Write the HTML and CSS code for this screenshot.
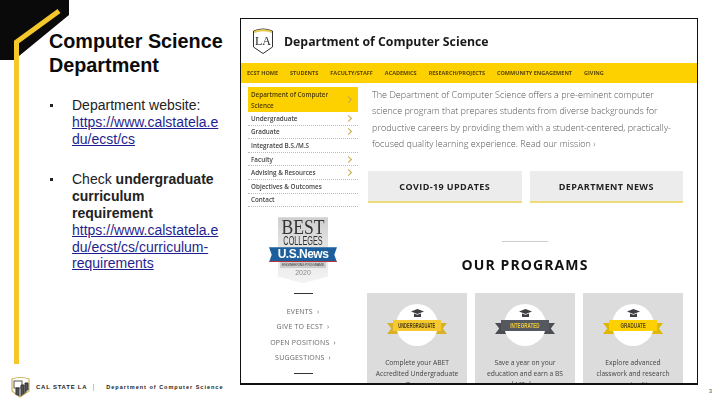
FILE: index.html
```html
<!DOCTYPE html>
<html lang="en">
<head>
<meta charset="utf-8">
<title>Computer Science Department</title>
<link rel="stylesheet" href="styles.css">
</head>
<body>
<div class="slide">
  <svg class="corner" width="70" height="364" viewBox="0 0 70 364">
    <polygon points="0,0 69,0 69,15 19,56 14,60 0,60" fill="#0a0a0a"/>
    <polyline points="59,11 16.500,42 16.500,364" fill="none" stroke="#f4c82a" stroke-width="5"/>
  </svg>
  <section class="left">
    <h1 class="title">Computer Science<br>Department</h1>
    <ul class="bullets">
      <li>Department website:<br><a href="#">https://www.calstatela.e<br>du/ecst/cs</a></li>
      <li>Check <b>undergraduate</b><br><b>curriculum</b><br><b>requirement</b><br><a href="#">https://www.calstatela.e<br>du/ecst/cs/curriculum-<br>requirements</a></li>
    </ul>
    <footer class="foot">
      <svg class="foot-logo" width="21" height="22" viewBox="0 0 21 22">
        <path d="M2 3 Q10 0 19 3 V15 L10 21 L2 15 Z" fill="#fff" stroke="#c9b25a" stroke-width="1.2"/>
        <rect x="4" y="5" width="8" height="7" fill="#fff" stroke="#555" stroke-width="1"/>
        <path d="M6 19 V12 H9 V20 M11 20 V9 H14 V18 M15 17 V7 H18 V14" fill="#555" stroke="#333" stroke-width="1"/>
      </svg>
      <span class="foot-cal">CAL STATE LA</span>
      <span class="foot-bar"></span>
      <span class="foot-dept">Department of Computer Science</span>
    </footer>
  </section>
  <section class="right">
    <div class="frame">
      <header class="site-head">
        <svg class="site-logo" width="22" height="28" viewBox="0 0 22 28">
          <path d="M1.5 4 Q11 0 20.500 4 V20 L11 26.500 L1.500 20 Z" fill="#fff" stroke="#333" stroke-width="1"/>
          <path d="M2 4 Q11 0.500 20 4 L20 6 Q11 2.500 2 6 Z" fill="#e8c84a"/>
          <text x="11" y="18" text-anchor="middle" class="site-logo-la">LA</text>
        </svg>
        <div class="site-title">Department of Computer Science</div>
      </header>
      <nav class="site-nav">
        <span>ECST HOME</span><span>STUDENTS</span><span>FACULTY/STAFF</span><span>ACADEMICS</span><span>RESEARCH/PROJECTS</span><span>COMMUNITY ENGAGEMENT</span><span>GIVING</span>
      </nav>
      <div class="site-body">
        <aside class="side">
          <ul class="side-menu">
            <li class="on"><span>Department of Computer Science</span><i class="chev"></i></li>
            <li><span>Undergraduate</span><i class="chev"></i></li>
            <li><span>Graduate</span><i class="chev"></i></li>
            <li><span>Integrated B.S./M.S</span></li>
            <li><span>Faculty</span><i class="chev"></i></li>
            <li><span>Advising &amp; Resources</span><i class="chev"></i></li>
            <li><span>Objectives &amp; Outcomes</span></li>
            <li><span>Contact</span></li>
          </ul>
          <div class="badge">
            <div class="badge-best">BEST</div>
            <div class="badge-col">COLLEGES</div>
            <div class="badge-us">U.S.News</div>
            <div class="badge-sub">ENGINEERING PROGRAMS</div>
            <div class="badge-year">2020</div>
          </div>
          <hr class="side-rule">
          <ul class="side-links">
            <li>EVENTS &nbsp;›</li>
            <li>GIVE TO ECST &nbsp;›</li>
            <li>OPEN POSITIONS &nbsp;›</li>
            <li>SUGGESTIONS &nbsp;›</li>
          </ul>
          <hr class="side-rule">
        </aside>
        <main class="content">
          <p class="lead">The Department of Computer Science offers a pre-eminent computer<br>science program that prepares students from diverse backgrounds for<br>productive careers by providing them with a student-centered, practically-<br>focused quality learning experience. Read our mission ›</p>
          <div class="tiles">
            <div class="tile">COVID-19 UPDATES</div>
            <div class="tile">DEPARTMENT NEWS</div>
          </div>
          <hr class="rule">
          <h2 class="programs-title">OUR PROGRAMS</h2>
          <div class="programs">
            <article class="prog">
              <div class="seal">
                <svg class="cap" width="13" height="9" viewBox="0 0 13 9"><path d="M0 2.500 L6.500 0 L13 2.500 L6.500 5 Z M3 4.500 L6.500 5.800 L10 4.500 V8 H3 Z" fill="#3d3f44"/></svg>
                <div class="ribbon r-gold"><span class="rt-long">UNDERGRADUATE</span></div>
              </div>
              <p>Complete your ABET<br>Accredited Undergraduate<br>Degree</p>
            </article>
            <article class="prog">
              <div class="seal">
                <svg class="cap" width="13" height="9" viewBox="0 0 13 9"><path d="M0 2.500 L6.500 0 L13 2.500 L6.500 5 Z M3 4.500 L6.500 5.800 L10 4.500 V8 H3 Z" fill="#3d3f44"/></svg>
                <div class="ribbon r-dark"><span>INTEGRATED</span></div>
              </div>
              <p>Save a year on your<br>education and earn a BS<br>and MS degree</p>
            </article>
            <article class="prog">
              <div class="seal">
                <svg class="cap" width="13" height="9" viewBox="0 0 13 9"><path d="M0 2.500 L6.500 0 L13 2.500 L6.500 5 Z M3 4.500 L6.500 5.800 L10 4.500 V8 H3 Z" fill="#3d3f44"/></svg>
                <div class="ribbon r-yellow"><span>GRADUATE</span></div>
              </div>
              <p>Explore advanced<br>classwork and research<br>opportunities</p>
            </article>
          </div>
        </main>
      </div>
    </div>
    <div class="page-num">3</div>
  </section>
</div>
</body>
</html>
```

FILE: styles.css
```css
* { box-sizing: border-box; }
html, body { margin: 0; padding: 0; background: #fff; }
ul { list-style: none; margin: 0; padding: 0; }
.slide {
  width: 720px; height: 405px; overflow: hidden; position: relative;
  display: grid; grid-template-columns: 240px 480px;
  font-family: "Liberation Sans", Arial, sans-serif; color: #111;
}
.corner { position: absolute; left: 0; top: 0; }

.left { display: flex; flex-direction: column; padding-top: 29px; position: relative; }
.title { margin: 0 0 0 49px; font-size: 19.800px; line-height: 24px; font-weight: 700; color: #0b0b0b; }
.bullets { margin: 20px 0 0 49px; font-size: 14px; line-height: 16.800px; color: #222; }
.bullets li { padding-left: 23px; margin-bottom: 24px; position: relative; }
.bullets li::before {
  content: ""; position: absolute; left: 1px; top: 7px; width: 3px; height: 3px; background: #222;
}
.bullets a { color: #1f1f8f; text-decoration: underline; }
.foot {
  margin-top: auto; margin-bottom: 7px; margin-left: 10px; height: 22px;
  display: flex; align-items: center; font-size: 5.500px; font-weight: 700; color: #222;
}
.foot-logo { flex: none; margin-right: 5px; }
.foot-cal { letter-spacing: .75px; white-space: nowrap; font-size: 6px; }
.foot-bar { width: 1px; height: 7px; background: #e6c84a; margin: 0 12px 0 6px; flex: none; }
.foot-dept { letter-spacing: 1px; white-space: nowrap; }

.right { display: flex; flex-direction: column; padding-top: 18px; }
.frame {
  width: 458px; height: 367px; border: 1px solid #111; border-bottom-width: 2px; overflow: hidden;
  background: #fff; filter: blur(.45px);
}
.page-num { text-align: right; padding-right: 8px; font-size: 6px; margin-top: 3px; color: #555; }

.site-head { height: 44px; display: flex; align-items: center; padding-left: 11px; }
.site-logo { flex: none; margin-right: 10px; }
.site-logo-la { font-family: "Liberation Serif", serif; font-size: 12px; font-weight: 400; fill: #222; }
.site-title { font-family: "Open Sans", sans-serif; font-weight: 700; font-size: 12.300px; color: #1a1a1a; white-space: nowrap; }
.site-nav {
  height: 20px; background: #fdd000; display: flex; align-items: center; gap: 12px; padding-left: 6px;
  font-family: "Open Sans", sans-serif; font-size: 5.500px; font-weight: 700; color: #5a4600; white-space: nowrap;
}

.site-body { display: flex; padding: 4px 0 0 7px; align-items: flex-start; }
.side { width: 110px; flex: none; }
.side-menu { font-family: "Open Sans", sans-serif; font-size: 6.300px; font-weight: 600; color: #444; }
.side-menu li {
  height: 13.600px; display: flex; align-items: center; justify-content: space-between; padding: 0 5px 0 3px;
  border-bottom: 1px dotted #bbb;
}
.side-menu li.on { height: 25px; background: #fdd000; border: 0; line-height: 11px; color: #4c3b00; }
.side-menu li.on span { width: 90px; }
.chev {
  width: 5px; height: 5px; border-top: 1px solid #c9a94a; border-right: 1px solid #c9a94a;
  transform: rotate(45deg); flex: none; margin-right: 2px;
}
.badge {
  width: 50px; height: 66px; margin: 10px auto 0; text-align: center; position: relative; padding-top: 2px; color: #333;
}
.badge::before {
  content: ""; position: absolute; inset: 0; z-index: -1;
  background: linear-gradient(#cfcfcf 0, #e4e4e4 45%, #f3f3f3 100%);
  clip-path: polygon(0 0, 100% 0, 100% 90%, 50% 100%, 0 90%);
}
.badge-best {
  font-family: "Liberation Serif", serif; font-size: 20px; line-height: 16px;
  transform: scaleX(.88); white-space: nowrap;
}
.badge-col {
  font-family: "Liberation Sans", sans-serif; font-size: 13px; line-height: 11px;
  transform: scaleX(.56); white-space: nowrap; margin: 0 -15px;
}
.badge-us {
  background: #1d5f9c; color: #fff; font-size: 12px; font-weight: 700; line-height: 14px;
  letter-spacing: -.5px; border-bottom: 1px solid #b33; margin: 1px -9px 0;
  clip-path: polygon(0 0, 100% 0, 96% 50%, 100% 100%, 0 100%, 4% 50%);
}
.badge-sub { font-size: 3.200px; line-height: 6px; background: #ccc; white-space: nowrap; overflow: hidden; margin: 0 2px; }
.badge-year { font-size: 7px; line-height: 9px; color: #888; }

.side-rule { border: 0; height: 1px; width: 19px; background: #333; margin: 10px auto 0; }
.side-links {
  margin-top: 10px; text-align: center; font-family: "Open Sans", sans-serif; font-size: 7px; line-height: 15.300px;
  color: #666; letter-spacing: .2px; white-space: nowrap;
}
.side-rule + .side-links + .side-rule { margin-top: 8px; }

.content { width: 316px; margin-left: 9px; flex: none; }
.lead {
  margin: 0; font-family: "Open Sans", sans-serif; font-weight: 300; font-size: 9.050px; line-height: 16.400px;
  color: #555; padding: 0 0 0 5px; height: 84px; white-space: nowrap;
}
.tiles { display: flex; gap: 8px; padding-left: 1px; }
.tile {
  flex: 1; height: 32px; background: #ececec; border-bottom: 2px solid #eedc7a;
  display: flex; align-items: center; justify-content: center;
  font-family: "Open Sans", sans-serif; font-weight: 700; font-size: 9px; color: #222; letter-spacing: .4px;
}
.rule { border: 0; height: 1px; width: 46px; background: #ccc; margin: 38px auto 0; }
.programs-title {
  margin: 14px 0 0; text-align: center; font-family: "Open Sans", sans-serif; font-weight: 700; font-size: 14px;
  line-height: 18px; letter-spacing: 1.100px; color: #111;
}
.programs { display: flex; gap: 8px; margin-top: 19px; }
.prog { flex: 1; background: #dcdcdc; height: 100px; padding-top: 11px; text-align: center; isolation: isolate; }
.prog p {
  margin: 11px 2px 0; font-family: "Open Sans", sans-serif; font-size: 6.700px; line-height: 11px; color: #444; white-space: nowrap;
}
.seal {
  width: 42px; height: 42px; border-radius: 50%; background: #fff; margin: 0 auto; position: relative;
  padding-top: 5px; text-align: center;
}
.cap { display: block; margin: 0 auto; }
.ribbon {
  position: absolute; left: -3px; right: -3px; top: 16px; height: 11px; line-height: 11px;
  font-family: "Liberation Sans", sans-serif; font-size: 6.500px; font-weight: 700; white-space: nowrap;
  display: flex; justify-content: center;
}
.ribbon span { display: block; flex: none; transform: scaleX(.7); }
.ribbon span.rt-long { transform: scaleX(.62); }
.ribbon::before, .ribbon::after {
  content: ""; position: absolute; top: 3px; width: 12px; height: 11px; z-index: -1; background: inherit; filter: brightness(.88);
}
.ribbon::before { left: -6px; clip-path: polygon(0 0, 100% 0, 100% 100%, 0 100%, 35% 50%); }
.ribbon::after { right: -6px; clip-path: polygon(0 0, 100% 0, 65% 50%, 100% 100%, 0 100%); }
.r-gold { background: #f5c92f; color: #4d3d12; }
.r-dark { background: #55585e; color: #f0cc3a; }
.r-yellow { background: #fdd000; color: #5b4d12; }
```
